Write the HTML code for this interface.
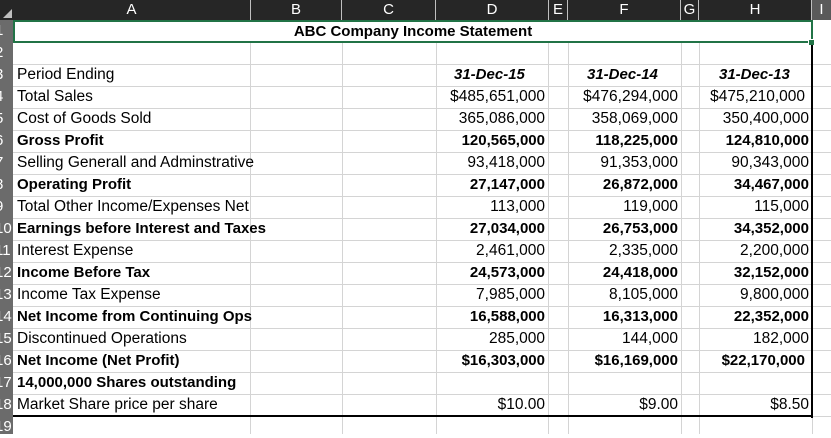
<!DOCTYPE html>
<html><head><meta charset="utf-8"><style>
*{margin:0;padding:0;box-sizing:border-box}
body{width:831px;height:434px;overflow:hidden;background:#fff;position:relative;font-family:"Liberation Sans",sans-serif;font-size:15.5px;color:#000}
.hdr{position:absolute;top:0;left:0;width:831px;height:20px;background:#262626}
.ch{position:absolute;top:0;height:20px;color:#fff;font-size:15px;line-height:20px;text-align:center;border-right:1px solid #bfbfbf}
.rh{position:absolute;left:0;top:20px;width:13px;height:414px;background:#6b6b6b}
.rn{position:absolute;left:0;width:13px;height:22px;overflow:hidden;color:#fff;font-size:15px;line-height:22px}
.rn span{position:absolute;left:-5px}
.vl{position:absolute;top:42px;width:1px;height:392px;background:#d4d4d4}
.hl{position:absolute;left:13px;width:818px;height:1px;background:#d4d4d4}
.r{position:absolute;left:13px;width:800px;height:22px;line-height:22px;white-space:nowrap}
.r .a{position:absolute;left:4px}
.r .d,.r .f,.r .h{position:absolute;text-align:right}
.d{right:268px}.f{right:135px}.h{right:4px}
.b{font-weight:bold;font-size:15px}
</style></head><body>
<div class="hdr"></div>
<div style="position:absolute;left:0;top:0;width:13px;height:20px;background:#262626"><div style="position:absolute;right:1px;bottom:2px;width:0;height:0;border-left:9px solid transparent;border-bottom:9px solid #bfbfbf"></div></div>
<div class="ch" style="left:13px;width:238px">A</div>
<div class="ch" style="left:251px;width:91px">B</div>
<div class="ch" style="left:342px;width:94px">C</div>
<div class="ch" style="left:436px;width:113px">D</div>
<div class="ch" style="left:549px;width:19px">E</div>
<div class="ch" style="left:568px;width:113px">F</div>
<div class="ch" style="left:681px;width:18px">G</div>
<div class="ch" style="left:699px;width:113px">H</div>
<div class="ch" style="left:812px;width:19px;background:#5a5a5a;border:none">I</div>
<div class="rh"></div>
<div class="rn" style="top:20px"><span>1</span></div>
<div class="rn" style="top:42px"><span>2</span></div>
<div class="rn" style="top:64px"><span>3</span></div>
<div class="rn" style="top:86px"><span>4</span></div>
<div class="rn" style="top:108px"><span>5</span></div>
<div class="rn" style="top:130px"><span>6</span></div>
<div class="rn" style="top:152px"><span>7</span></div>
<div class="rn" style="top:174px"><span>8</span></div>
<div class="rn" style="top:196px"><span>9</span></div>
<div class="rn" style="top:218px"><span>10</span></div>
<div class="rn" style="top:240px"><span>11</span></div>
<div class="rn" style="top:262px"><span>12</span></div>
<div class="rn" style="top:284px"><span>13</span></div>
<div class="rn" style="top:306px"><span>14</span></div>
<div class="rn" style="top:328px"><span>15</span></div>
<div class="rn" style="top:350px"><span>16</span></div>
<div class="rn" style="top:372px"><span>17</span></div>
<div class="rn" style="top:394px"><span>18</span></div>
<div class="rn" style="top:416px"><span>19</span></div>
<div class="vl" style="left:250px"></div><div class="vl" style="left:342px"></div><div class="vl" style="left:436px"></div><div class="vl" style="left:548px"></div><div class="vl" style="left:568px"></div><div class="vl" style="left:681px"></div><div class="vl" style="left:699px"></div><div class="vl" style="left:812px"></div>
<div class="hl" style="top:64px"></div><div class="hl" style="top:86px"></div><div class="hl" style="top:108px"></div><div class="hl" style="top:130px"></div><div class="hl" style="top:152px"></div><div class="hl" style="top:174px"></div><div class="hl" style="top:196px"></div><div class="hl" style="top:218px"></div><div class="hl" style="top:240px"></div><div class="hl" style="top:262px"></div><div class="hl" style="top:284px"></div><div class="hl" style="top:306px"></div><div class="hl" style="top:328px"></div><div class="hl" style="top:350px"></div><div class="hl" style="top:372px"></div><div class="hl" style="top:394px"></div><div class="hl" style="top:416px"></div>
<div style="position:absolute;left:13px;top:20px;width:800px;height:23px;background:#fff;border:2px solid #217346;text-align:center;font-weight:bold;font-size:15px;line-height:19px">ABC Company Income Statement</div>
<div style="position:absolute;left:808px;top:39px;width:7px;height:7px;background:#217346;border:1px solid #fff"></div>
<div style="position:absolute;left:811px;top:45px;width:2px;height:373px;background:#000"></div>
<div style="position:absolute;left:13px;top:415px;width:800px;height:2px;background:#000"></div>
<div class="r" style="top:64px"><span class="a">Period Ending</span><span class="d b" style="right:auto;left:441px"><i>31-Dec-15</i></span><span class="f b" style="right:auto;left:574px"><i>31-Dec-14</i></span><span class="h b" style="right:auto;left:706px"><i>31-Dec-13</i></span></div>
<div class="r" style="top:86px"><span class="a">Total Sales</span><span class="d">$485,651,000</span><span class="f">$476,294,000</span><span class="h" style="right:8px">$475,210,000</span></div>
<div class="r" style="top:108px"><span class="a">Cost of Goods Sold</span><span class="d">365,086,000</span><span class="f">358,069,000</span><span class="h">350,400,000</span></div>
<div class="r b" style="top:130px"><span class="a">Gross Profit</span><span class="d">120,565,000</span><span class="f">118,225,000</span><span class="h">124,810,000</span></div>
<div class="r" style="top:152px"><span class="a">Selling Generall and Adminstrative</span><span class="d">93,418,000</span><span class="f">91,353,000</span><span class="h">90,343,000</span></div>
<div class="r b" style="top:174px"><span class="a">Operating Profit</span><span class="d">27,147,000</span><span class="f">26,872,000</span><span class="h">34,467,000</span></div>
<div class="r" style="top:196px"><span class="a">Total Other Income/Expenses Net</span><span class="d">113,000</span><span class="f">119,000</span><span class="h">115,000</span></div>
<div class="r b" style="top:218px"><span class="a">Earnings before Interest and Taxes</span><span class="d">27,034,000</span><span class="f">26,753,000</span><span class="h">34,352,000</span></div>
<div class="r" style="top:240px"><span class="a">Interest Expense</span><span class="d">2,461,000</span><span class="f">2,335,000</span><span class="h">2,200,000</span></div>
<div class="r b" style="top:262px"><span class="a">Income Before Tax</span><span class="d">24,573,000</span><span class="f">24,418,000</span><span class="h">32,152,000</span></div>
<div class="r" style="top:284px"><span class="a">Income Tax Expense</span><span class="d">7,985,000</span><span class="f">8,105,000</span><span class="h">9,800,000</span></div>
<div class="r b" style="top:306px"><span class="a">Net Income from Continuing Ops</span><span class="d">16,588,000</span><span class="f">16,313,000</span><span class="h">22,352,000</span></div>
<div class="r" style="top:328px"><span class="a">Discontinued Operations</span><span class="d">285,000</span><span class="f">144,000</span><span class="h">182,000</span></div>
<div class="r b" style="top:350px"><span class="a">Net Income (Net Profit)</span><span class="d">$16,303,000</span><span class="f">$16,169,000</span><span class="h" style="right:8px">$22,170,000</span></div>
<div class="r b" style="top:372px"><span class="a">14,000,000 Shares outstanding</span></div>
<div class="r" style="top:394px"><span class="a">Market Share price per share</span><span class="d">$10.00</span><span class="f">$9.00</span><span class="h">$8.50</span></div>
</body></html>
